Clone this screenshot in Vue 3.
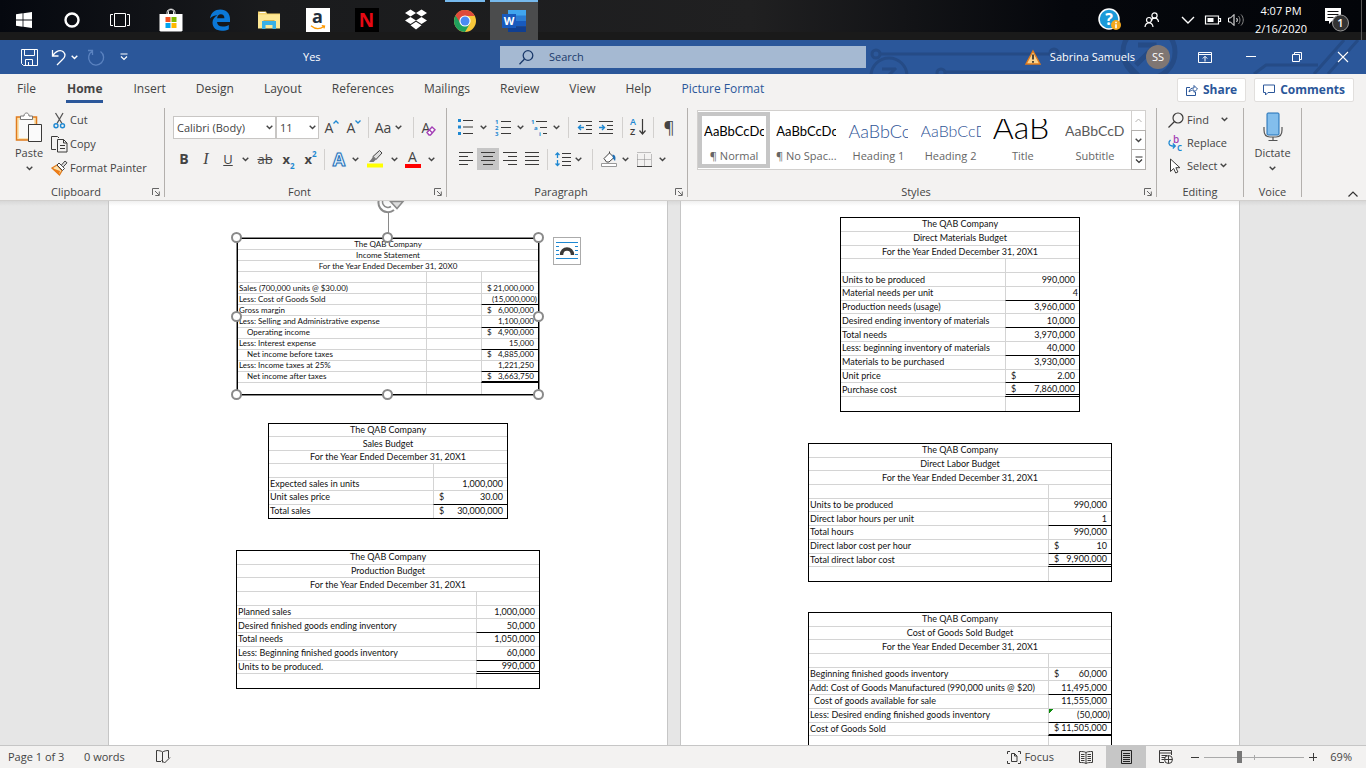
<script setup>
import {h, ref} from "vue";

const Caret = () => h('svg', {class: 'caret', width: 7, height: 5, viewBox: '0 0 7 5'}, [
    h('path', {d: 'M.7.8 3.5 3.6 6.3.8', fill: 'none', stroke: 'currentColor', 'stroke-width': 1.4})
])
const Launcher = () => h('svg', {class: 'launcher', width: 8, height: 8, viewBox: '0 0 8 8'}, [
    h('path', {d: 'M.5 7V.5H7M3 3l4 4M7.3 3.5v4h-4', fill: 'none', stroke: '#666'})
])

const tabs = ['File', 'Home', 'Insert', 'Design', 'Layout', 'References', 'Mailings', 'Review', 'View', 'Help', 'Picture Format']
const activeTab = ref('Home')
const zoom = ref(35)

const styles = [
    {name: '¶ Normal', sample: 'AaBbCcDc', kind: 'body'},
    {name: '¶ No Spac...', sample: 'AaBbCcDc', kind: 'body'},
    {name: 'Heading 1', sample: 'AaBbCc', kind: 'h1'},
    {name: 'Heading 2', sample: 'AaBbCcD', kind: 'h2'},
    {name: 'Title', sample: 'AaB', kind: 'title'},
    {name: 'Subtitle', sample: 'AaBbCcD', kind: 'subtitle'},
]
const activeStyle = ref('¶ Normal')

// line: 'under' is a subtotal rule, 'double' and 'thick' close the statement
const income = {
    id: 'income',
    cols: 3,
    heads: ['The QAB Company', 'Income Statement', 'For the Year Ended December 31, 20X0'],
    rows: [
        {},
        {label: 'Sales (700,000 units @ $30.00)', sign: '$', value: '21,000,000'},
        {label: 'Less: Cost of Goods Sold', value: '(15,000,000)', line: 'under', flush: true},
        {label: 'Gross margin', sign: '$', value: '6,000,000'},
        {label: 'Less: Selling and Administrative expense', value: '1,100,000', line: 'under'},
        {label: 'Operating income', sign: '$', value: '4,900,000', indent: true},
        {label: 'Less: Interest expense', value: '15,000', line: 'under'},
        {label: 'Net income before taxes', sign: '$', value: '4,885,000', indent: true},
        {label: 'Less: Income taxes at 25%', value: '1,221,250', line: 'under'},
        {label: 'Net income after taxes', sign: '$', value: '3,663,750', indent: true, line: 'thick'},
        {},
    ]
}
const sales = {
    id: 'sales',
    cols: 2,
    heads: ['The QAB Company', 'Sales Budget', 'For the Year Ended December 31, 20X1'],
    rows: [
        {},
        {label: 'Expected sales in units', value: '1,000,000'},
        {label: 'Unit sales price', sign: '$', value: '30.00', line: 'under'},
        {label: 'Total sales', sign: '$', value: '30,000,000'},
    ]
}
const production = {
    id: 'production',
    cols: 2,
    heads: ['The QAB Company', 'Production Budget', 'For the Year Ended December 31, 20X1'],
    rows: [
        {},
        {label: 'Planned sales', value: '1,000,000'},
        {label: 'Desired finished goods ending inventory', value: '50,000', line: 'under'},
        {label: 'Total needs', value: '1,050,000'},
        {label: 'Less: Beginning finished goods inventory', value: '60,000', line: 'under'},
        {label: 'Units to be produced.', value: '990,000', line: 'double'},
        {},
    ]
}
const materials = {
    id: 'materials',
    cols: 2,
    heads: ['The QAB Company', 'Direct Materials Budget', 'For the Year Ended December 31, 20X1'],
    rows: [
        {},
        {label: 'Units to be produced', value: '990,000'},
        {label: 'Material needs per unit', value: '4', line: 'under', flush: true},
        {label: 'Production needs (usage)', value: '3,960,000'},
        {label: 'Desired ending inventory of materials', value: '10,000', line: 'under'},
        {label: 'Total needs', value: '3,970,000'},
        {label: 'Less: beginning inventory of materials', value: '40,000', line: 'under'},
        {label: 'Materials to be purchased', value: '3,930,000'},
        {label: 'Unit price', sign: '$', value: '2.00', line: 'under'},
        {label: 'Purchase cost', sign: '$', value: '7,860,000', line: 'double'},
        {},
    ]
}
const labor = {
    id: 'labor',
    cols: 2,
    heads: ['The QAB Company', 'Direct Labor Budget', 'For the Year Ended December 31, 20X1'],
    rows: [
        {},
        {label: 'Units to be produced', value: '990,000'},
        {label: 'Direct labor hours per unit', value: '1', line: 'under'},
        {label: 'Total hours', value: '990,000'},
        {label: 'Direct labor cost per hour', sign: '$', value: '10', line: 'under'},
        {label: 'Total direct labor cost', sign: '$', value: '9,900,000', line: 'double'},
        {},
    ]
}
const goods = {
    id: 'goods',
    cols: 2,
    heads: ['The QAB Company', 'Cost of Goods Sold Budget', 'For the Year Ended December 31, 20X1'],
    rows: [
        {},
        {label: 'Beginning finished goods inventory', sign: '$', value: '60,000'},
        {label: 'Add: Cost of Goods Manufactured (990,000 units @ $20)', value: '11,495,000', line: 'under'},
        {label: 'Cost of goods available for sale', value: '11,555,000', nudge: true},
        {label: 'Less: Desired ending finished goods inventory', value: '(50,000)', line: 'under', flush: true, flag: true},
        {label: 'Cost of Goods Sold', sign: '$', value: '11,505,000', line: 'thick'},
        {},
    ]
}
const pages = [[income, sales, production], [materials, labor, goods]]
const handles = ['tl', 'tc', 'tr', 'ml', 'mr', 'bl', 'bc', 'br']
</script>
<template>
    <div class="screen">
        <header class="taskbar">
            <div class="apps">
                <button aria-label="Start">
                    <svg width="16" height="16" viewBox="0 0 16 16" fill="#fff"><path d="M0 2.2 6.6 1.3V7.6H0zM7.4 1.2 16 0V7.6H7.4zM0 8.4H6.6V14.7L0 13.8zM7.4 8.4H16V16L7.4 14.8z"/></svg>
                </button>
                <button aria-label="Cortana">
                    <svg width="16" height="16" viewBox="0 0 16 16"><circle cx="8" cy="8" r="6.5" fill="none" stroke="#fff" stroke-width="2.4"/></svg>
                </button>
                <button aria-label="Task View">
                    <svg width="20" height="16" viewBox="0 0 20 16" fill="none" stroke="#fff"><path d="M4.500 1.500h11v13h-11zM3 2.500H.5v11H3M17 2.500h2.500v11H17"/></svg>
                </button>
                <button aria-label="Store">
                    <svg width="24" height="24" viewBox="0 0 24 24"><path d="M8 7V4.500C8 0 16 0 16 4.500V7M9.500 7V3.500C9.500 1 14.500 1 14.500 3.500V7" fill="none" stroke="#eee"/><path d="M.5 6h23v16.500l-1 1h-21l-1-1z" fill="#fff"/><path d="M6.500 9h5v5h-5z" fill="#f25022"/><path d="M12.500 9h5v5h-5z" fill="#7fba00"/><path d="M6.500 15h5v5h-5z" fill="#00a4ef"/><path d="M12.500 15h5v5h-5z" fill="#ffb900"/></svg>
                </button>
                <button aria-label="Edge">
                    <svg width="22" height="22" viewBox="0 0 22 22"><path d="M1 9.500C2 3.500 6 .5 11.300.5c6 0 9.700 4 9.700 9.600V13H8c.2 3 2.500 4.600 5.800 4.600 2.200 0 4.200-.6 6-1.600v4.300c-2 1-4.300 1.500-7 1.500-6 0-9.300-3.300-9.300-8.200C3.500 10.300 5.600 7.600 8.500 6.300 4.900 6.500 2.500 7.500 1 9.500zM8.100 9.200h7.300c0-2.600-1.300-4-3.500-4S8.500 6.800 8.100 9.200z" fill="#0b78d7"/></svg>
                </button>
                <button aria-label="File Explorer">
                    <svg width="22" height="20" viewBox="0 0 22 20"><path d="M0 1.500h8l1 2h13V18H0z" fill="#f5d36b"/><path d="M0 4.500h22V18.500H0z" fill="#fde794"/><path d="M1.500 2h6v1h-6z" fill="#fff"/><path d="M4 19v-8h14v8h-3.500v-4h-7v4z" fill="#38b0e6"/><path d="M5.500 11v-1h11v1z" fill="#d9b04a"/></svg>
                </button>
                <button aria-label="Amazon">
                    <span class="amazon"><b>a</b><svg width="16" height="5" viewBox="0 0 16 5"><path d="M1 .8C5 4.200 10 4.200 14 1.500M11.800.7 14.500 1 14 3.300" fill="none" stroke="#f90" stroke-width="1.300"/></svg></span>
                </button>
                <button aria-label="Netflix"><span class="netflix">N</span></button>
                <button aria-label="Dropbox">
                    <svg width="24" height="22" viewBox="0 0 24 22" fill="#fff"><path d="M6.500.5 12 4 6.500 7.500 1 4zM17.500.5 23 4l-5.500 3.500L12 4zM6.500 8 12 11.500 6.500 15 1 11.500zM17.500 8l5.500 3.500-5.500 3.500L12 11.500zM6.500 16.200 12 12.700l5.500 3.500L12 20.500z"/></svg>
                </button>
                <button class="running" aria-label="Chrome">
                    <svg width="24" height="24" viewBox="0 0 24 24"><circle cx="12" cy="12" r="11" fill="#f8c83a"/><path d="M12 12 2.500 6.500A11 11 0 0 0 12 23l5-8.500z" fill="#1fa15d"/><path d="M2.500 6.500A11 11 0 0 1 21.800 7H12a5 5 0 0 0-4.500 7.300z" fill="#de4b3c"/><circle cx="12" cy="12" r="5.600" fill="#fff"/><circle cx="12" cy="12" r="4.500" fill="#4a8af4"/></svg>
                </button>
                <button class="running current" aria-label="Word">
                    <svg width="24" height="22" viewBox="0 0 24 22"><path d="M6 0h18v6H6z" fill="#41a5ee"/><path d="M6 5.500h18V11H6z" fill="#2b7cd3"/><path d="M6 11h18v5.500H6z" fill="#185abd"/><path d="M6 16.500h18V22H6z" fill="#103f91"/><path d="M0 4h14v14H0z" fill="#185abd"/><text x="7" y="15" text-anchor="middle" font-family="Open Sans, sans-serif" font-weight="700" font-size="11" fill="#fff">W</text></svg>
                </button>
            </div>
            <div class="tray">
                <svg width="24" height="24" viewBox="0 0 24 24"><circle cx="11" cy="11" r="10" fill="#1a9ad9" stroke="#fff" stroke-width="1.500"/><text x="11" y="17" text-anchor="middle" font-family="Open Sans, sans-serif" font-weight="700" font-size="16" fill="#fff">?</text><circle cx="18" cy="17" r="5" fill="#f5a81c"/><path d="M18 13.800v1.500M18 16.300v4" stroke="#fff" stroke-width="1.600"/></svg>
                <svg width="16" height="16" viewBox="0 0 16 16" fill="none" stroke="#fff" stroke-width="1.200"><circle cx="10.500" cy="3.500" r="2.600"/><path d="M7.500 9c.5-4 6.500-4 7 1"/><circle cx="5" cy="8" r="2.500"/><path d="M1 15c.5-5.500 7.500-5.500 8 0"/></svg>
                <svg width="14" height="8" viewBox="0 0 14 8" fill="none" stroke="#fff" stroke-width="1.400"><path d="M1 1l6 6 6-6"/></svg>
                <svg width="16" height="10" viewBox="0 0 16 10"><path d="M.5 1h13v8H.5zM14 3.500h1.500v3H14" fill="none" stroke="#fff" stroke-width="1.200"/><path d="M2.500 3h6v4h-6z" fill="#fff"/></svg>
                <svg width="16" height="14" viewBox="0 0 16 14" fill="none" stroke="#fff"><path d="M.5 5h2L6 1.500v11L2.500 9h-2z"/><path d="M8.500 5c1 1 1 3 0 4"/><path d="M10.500 3c2 2 2 6 0 8M13 1.500c3 3 3 8 0 11" stroke="#888"/></svg>
                <div class="clock"><span>4:07 PM</span><span>2/16/2020</span></div>
                <svg class="notes" width="24" height="26" viewBox="0 0 24 26"><path d="M0 1h16v13H7l-3 3v-3H0z" fill="#fff"/><path d="M2.500 4.500h11M2.500 7.500h11M2.500 10.500h6" stroke="#111"/><circle cx="15.500" cy="16" r="8" fill="#333" stroke="#999"/><text x="15.500" y="20" text-anchor="middle" font-family="Open Sans, sans-serif" font-size="11" font-weight="600" fill="#fff">1</text></svg>
            </div>
        </header>

        <div class="titlebar">
            <div class="quick">
                <button aria-label="Save"><svg width="17" height="17" viewBox="0 0 17 17" fill="none" stroke="#fff"><path d="M.5.5h16v16h-14l-2-2zM3.500.5v6h10v-6M4.500 16.500v-6h7v6M7.500 13v3.500"/></svg></button>
                <button aria-label="Undo"><svg width="16" height="17" viewBox="0 0 16 17" fill="none" stroke="#fff" stroke-width="1.300"><path d="M1.500 1v6h6M1.500 7C5 1 10 .5 12.500 3c2.500 2.500 1.500 5.500-1 7.500L6 16"/></svg></button>
                <Caret/>
                <button aria-label="Redo"><svg width="17" height="17" viewBox="0 0 17 17" fill="none" stroke="#5b83c0" stroke-width="1.300"><path d="M12.500 2.500a7.500 7.500 0 1 1-8-.5M4.500 6V1.500H0"/></svg></button>
                <button aria-label="Customize"><svg width="8" height="8" viewBox="0 0 8 8" fill="none" stroke="#fff" stroke-width="1.200"><path d="M.5 1h7M1 3.500l3 3 3-3"/></svg></button>
                <span class="doc-name">Yes</span>
            </div>
            <label class="search">
                <svg width="15" height="15" viewBox="0 0 15 15" fill="none" stroke="#1b3a6b" stroke-width="1.300"><circle cx="9" cy="5.500" r="4.800"/><path d="M5.500 9 .5 14.300"/></svg>
                <input type="text" placeholder="Search" aria-label="Search">
            </label>
            <div class="account">
                <svg class="circuit" width="500" height="34" viewBox="0 0 500 34" fill="none" stroke="#254b86" stroke-width="3"><circle cx="10" cy="14" r="4"/><path d="M14 14h171l8 5h65l14 15"/><circle cx="23" cy="36" r="18" /><path d="M16 29h12M30 28l-14 14"/><circle cx="75" cy="33" r="4"/><path d="M79 32h95"/><circle cx="188" cy="13" r="4"/><circle cx="283" cy="12" r="26" stroke-width="5"/><path d="M270 25l18-18M272 5h16v16" stroke-width="5"/><path d="M388 34l12-9h52M448 34 478 0M462 34 492 0"/></svg>
                <svg class="warn" width="16" height="15" viewBox="0 0 16 15"><path d="M8 1 15 14H1z" fill="#fbd28b" stroke="#e07b1d" stroke-width="1.400"/><path d="M8 4.500v5M8 11v1.700" stroke="#222" stroke-width="1.600"/></svg>
                <span class="user">Sabrina Samuels</span>
                <span class="avatar">SS</span>
                <button aria-label="Ribbon Display Options"><svg width="14" height="11" viewBox="0 0 14 11" fill="none" stroke="#fff"><path d="M.5.5h13v10H.5zM.5 2.500h13M7 9.500V4.500M4.800 6.500 7 4.300l2.200 2.200"/></svg></button>
                <button aria-label="Minimize"><svg width="10" height="10" viewBox="0 0 10 10" stroke="#fff"><path d="M0 4.500h10"/></svg></button>
                <button aria-label="Restore"><svg width="10" height="10" viewBox="0 0 10 10" fill="none" stroke="#fff"><path d="M.5 2.500h7v7h-7zM2.500 2V.5h7v7H8"/></svg></button>
                <button aria-label="Close"><svg width="10" height="10" viewBox="0 0 10 10" stroke="#fff" stroke-width="1.100"><path d="M0 0l10 10M10 0 0 10"/></svg></button>
            </div>
        </div>

        <nav class="tabs">
            <a v-for="tab in tabs" :key="tab" href="#" :class="{active: tab === activeTab, context: tab === 'Picture Format'}" @click.prevent="activeTab = tab">{{tab}}</a>
            <div class="tab-actions">
                <button><svg width="12" height="12" viewBox="0 0 12 12" fill="none" stroke="#2b579a"><path d="M4 3.500H.5v8h9V8M3 8c.5-3 2-4 5-4V1.500L11.500 5 8 8.300V6C6 6 4.500 6.500 3 8z"/></svg>Share</button>
                <button><svg width="12" height="12" viewBox="0 0 12 12" fill="none" stroke="#2b579a"><path d="M.5 1h11v7.500H5L2.500 11V8.500h-2z"/></svg>Comments</button>
            </div>
        </nav>

        <div class="ribbon">
            <section class="group clipboard">
                <div class="clip-body">
                    <button class="big">
                        <svg width="28" height="31" viewBox="0 0 28 31"><path d="M1.500 5h20v23h-20z" fill="#fbe3b0" stroke="#e07b1d" stroke-width="1.500"/><path d="M4 8h15v18H4z" fill="#fafafa"/><path d="M5.500 7.500V4h3.500c0-4 5-4 5 0h3.500v3.500z" fill="#fff" stroke="#777"/><path d="M13.500 12.500h13v17h-13z" fill="#fafafa" stroke="#3b3a39"/></svg>
                        <span>Paste</span>
                        <Caret/>
                    </button>
                    <div class="stack">
                        <button><svg width="17" height="17" viewBox="0 0 17 17" fill="none"><path d="M4.500 1 11 11.500M12 1 6 11.500" stroke="#555" stroke-width="1.300"/><circle cx="5" cy="13.700" r="2" stroke="#1e88d2" stroke-width="1.400"/><circle cx="11.500" cy="13.700" r="2" stroke="#1e88d2" stroke-width="1.400"/></svg>Cut</button>
                        <button><svg width="17" height="17" viewBox="0 0 17 17" fill="none" stroke="#3b3a39"><path d="M5 13.500H.5V.5h6l1.500 1.500"/><path d="M6.500 3.500h6l3.500 3.500v9H6.500zM12.500 3.500V7H16M9 9.500h5M9 12.500h5" fill="#f3f2f1"/></svg>Copy</button>
                        <button><svg width="17" height="17" viewBox="0 0 17 17"><path d="M1 8l5-3 5 5.500L8.500 15z" fill="#fbe3b0" stroke="#e07b1d" stroke-width="1.300"/><path d="M1 8l8 3-1 4z" fill="#ee7d17"/><path d="M6 5l2-2 5.500 5.500-2 2z" fill="#fff" stroke="#444"/><path d="M10.500 5 14 1l2 1.800-3.700 4" fill="#ddd" stroke="#444"/></svg>Format Painter</button>
                    </div>
                </div>
                <footer><span>Clipboard</span><Launcher/></footer>
            </section>

            <section class="group font">
                <div class="row font-1">
                    <label class="pick"><select aria-label="Font"><option>Calibri (Body)</option></select><Caret/></label>
                    <label class="pick"><select aria-label="Font size"><option>11</option></select><Caret/></label>
                    <button class="grow" aria-label="Increase Font Size">A<svg width="6" height="4" viewBox="0 0 6 4" fill="none" stroke="#1e88d2" stroke-width="1.300"><path d="M.5 3.500 3 1l2.500 2.500"/></svg></button>
                    <button class="grow" aria-label="Decrease Font Size">A<svg width="6" height="4" viewBox="0 0 6 4" fill="none" stroke="#1e88d2" stroke-width="1.300"><path d="M.5.5 3 3 5.500.5"/></svg></button>
                    <i class="sep"></i>
                    <button class="aa">Aa</button>
                    <Caret/>
                    <i class="sep"></i>
                    <button class="clear" aria-label="Clear Formatting"><span>A</span><svg width="10" height="10" viewBox="0 0 10 10" fill="#fff" stroke="#a33fb5" stroke-width="1.400"><path d="M1 6.500 6 1l3 2.700L4.500 9H3zM3.500 4l3 3"/></svg></button>
                </div>
                <div class="row font-2">
                    <button><b>B</b></button>
                    <button><em>I</em></button>
                    <button><u>U</u></button>
                    <Caret/>
                    <button><s>ab</s></button>
                    <button class="script"><b>x</b><sub>2</sub></button>
                    <button class="script"><b>x</b><sup>2</sup></button>
                    <i class="sep"></i>
                    <button class="effects">A</button>
                    <Caret/>
                    <button aria-label="Highlight"><svg width="16" height="18" viewBox="0 0 16 18"><path d="M0 13.500h16V17.500H0z" fill="#ff0"/><path d="M6 6.500 12.500.5l2.500 2.500-6 6.500z" fill="#ddd" stroke="#444"/><path d="M6 6.500 4.500 9 2 12h4.500L9 9.500z" fill="#777"/></svg></button>
                    <Caret/>
                    <button class="colour">A</button>
                    <Caret/>
                </div>
                <footer><span>Font</span><Launcher/></footer>
            </section>

            <section class="group paragraph">
                <div class="row para-1">
                    <button aria-label="Bullets"><svg width="15" height="16" viewBox="0 0 15 16"><path d="M0 0h3v3H0zM0 6.500h3v3H0zM0 13h3v3H0z" fill="#1e88d2"/><path d="M5 1.500h10M5 8h10M5 14.500h10" stroke="#3b3a39"/></svg></button>
                    <Caret/>
                    <button aria-label="Numbering"><svg width="16" height="17" viewBox="0 0 16 17"><g class="nums"><text x="0" y="5">1</text><text x="0" y="11">2</text><text x="0" y="17">3</text></g><path d="M6 2.500h10M6 8.500h10M6 14.500h10" stroke="#3b3a39"/></svg></button>
                    <Caret/>
                    <button aria-label="Multilevel List"><svg width="17" height="17" viewBox="0 0 17 17"><g class="nums"><text x="0" y="5">1</text><text x="3" y="11">a</text><text x="8" y="17">i</text></g><path d="M5 2.500h11M9 8.500h7M12 14.500h4" stroke="#3b3a39"/></svg></button>
                    <Caret/>
                    <i class="sep"></i>
                    <button aria-label="Decrease Indent"><svg width="14" height="13" viewBox="0 0 14 13" fill="none" stroke="#3b3a39"><path d="M0 .5h14M8 4.500h6M8 8.500h6M0 12.500h14"/><path d="M.5 6.500H6M3 4 .5 6.500 3 9" stroke="#1e88d2" stroke-width="1.400"/></svg></button>
                    <button aria-label="Increase Indent"><svg width="14" height="13" viewBox="0 0 14 13" fill="none" stroke="#3b3a39"><path d="M0 .5h14M8 4.500h6M8 8.500h6M0 12.500h14"/><path d="M0 6.500h5.500M3 4l2.500 2.500L3 9" stroke="#1e88d2" stroke-width="1.400"/></svg></button>
                    <i class="sep"></i>
                    <button aria-label="Sort"><svg width="17" height="18" viewBox="0 0 17 18"><g class="sort"><text x="0" y="7" fill="#1e88d2">A</text><text x="0" y="17" fill="#3b3a39">Z</text></g><path d="M12.500 1v15M9.500 12.500l3 3.500 3-3.500" fill="none" stroke="#3b3a39" stroke-width="1.200"/></svg></button>
                    <i class="sep"></i>
                    <button class="pilcrow">¶</button>
                </div>
                <div class="row para-2">
                    <button aria-label="Align Left"><svg width="14" height="14" viewBox="0 0 14 14" stroke="#3b3a39"><path d="M0 .5h14M0 4.500h9M0 8.500h14M0 12.500h9"/></svg></button>
                    <button class="pressed" aria-label="Center"><svg width="14" height="14" viewBox="0 0 14 14" stroke="#3b3a39"><path d="M0 .5h14M2 4.500h10M0 8.500h14M2 12.500h10"/></svg></button>
                    <button aria-label="Align Right"><svg width="14" height="14" viewBox="0 0 14 14" stroke="#3b3a39"><path d="M0 .5h14M5 4.500h9M0 8.500h14M5 12.500h9"/></svg></button>
                    <button aria-label="Justify"><svg width="14" height="14" viewBox="0 0 14 14" stroke="#3b3a39"><path d="M0 .5h14M0 4.500h14M0 8.500h14M0 12.500h14"/></svg></button>
                    <i class="sep"></i>
                    <button aria-label="Line Spacing"><svg width="16" height="14" viewBox="0 0 16 14" fill="none" stroke="#3b3a39"><path d="M7 1.500h9M7 5.500h9M7 9.500h9M7 13.500h9"/><path d="M2.500 1v5M.5 3l2-2 2 2M2.500 8v5.500M.5 11.500l2 2 2-2" stroke="#1e88d2" stroke-width="1.300"/></svg></button>
                    <Caret/>
                    <i class="sep"></i>
                    <button aria-label="Shading"><svg width="16" height="16" viewBox="0 0 16 16"><path d="M3 7.500 8.500 2 13 6.500 8 11H5.500zM8.500 2V.5" fill="#fff" stroke="#444"/><path d="M11.500 3.500c3 .5 3.500 3 2.500 6.500L12 7.500z" fill="#1e6fb5"/><path d="M.5 12.500h15v3H.5z" fill="#fff" stroke="#999"/></svg></button>
                    <Caret/>
                    <button aria-label="Borders"><svg width="15" height="15" viewBox="0 0 15 15" fill="none" stroke="#888" stroke-dasharray="1 1"><path d="M.5.5h14M.5 2.500v11M7.500 2.500v11M14.500 2.500v11M.5 7.500h14"/><path d="M0 14.500h15" stroke="#444" stroke-dasharray="none"/></svg></button>
                    <Caret/>
                </div>
                <footer><span>Paragraph</span><Launcher/></footer>
            </section>

            <section class="group styles">
                <div class="gallery">
                    <button v-for="s in styles" :key="s.name" class="style" :class="{chosen: s.name === activeStyle}" @click="activeStyle = s.name">
                        <span class="sample" :class="s.kind">{{s.sample}}</span>
                        <span class="style-name">{{s.name}}</span>
                    </button>
                    <div class="scroll">
                        <button disabled aria-label="Up"><svg width="7" height="5" viewBox="0 0 7 5" fill="none" stroke="#b5b3b1"><path d="M.5 4l3-3 3 3"/></svg></button>
                        <button aria-label="Down"><Caret/></button>
                        <button aria-label="More"><svg width="8" height="8" viewBox="0 0 8 8" fill="none" stroke="#333" stroke-width="1.200"><path d="M.5 1h7M1 3.500l3 3 3-3"/></svg></button>
                    </div>
                </div>
                <footer><span>Styles</span><Launcher/></footer>
            </section>

            <section class="group editing">
                <div class="stack">
                    <button><svg width="16" height="16" viewBox="0 0 16 16" fill="none" stroke="#3b3a39" stroke-width="1.200"><circle cx="10" cy="6" r="5"/><path d="M6.500 9.500.5 15.500"/></svg>Find<Caret class="far"/></button>
                    <button><svg width="16" height="16" viewBox="0 0 16 16"><g font-family="Open Sans, sans-serif" font-size="10" font-weight="600"><text x="5" y="8" fill="#a33fb5">b</text><text x="9" y="16" fill="#1e88d2">c</text></g><path d="M2.500 5c-2.500 2-2 5.500 1.500 6h3M4.800 8.500 7.300 11l-2.500 2.500" fill="none" stroke="#1e88d2" stroke-width="1.300"/></svg>Replace</button>
                    <button><svg width="16" height="16" viewBox="0 0 16 16" fill="#fff" stroke="#3b3a39"><path d="M2.500 1v12.500L5.700 10.500l2 4.500 2.200-1-2-4.300h4z"/></svg>Select<Caret/></button>
                </div>
                <footer><span>Editing</span></footer>
            </section>

            <section class="group voice">
                <button class="big">
                    <svg width="20" height="31" viewBox="0 0 20 31"><rect x="4" y="1" width="12" height="22" rx="1" fill="#83beec" stroke="#1e6fb5"/><path d="M1 15v3c0 4 2 7 6 7h6c4 0 6-3 6-7v-3M10 25v3M5.500 28.500h9" fill="none" stroke="#555" stroke-width="1.200"/></svg>
                    <span>Dictate</span>
                    <Caret/>
                </button>
                <footer><span>Voice</span></footer>
            </section>
            <button class="collapse" aria-label="Collapse the Ribbon"><svg width="10" height="6" viewBox="0 0 10 6" fill="none" stroke="#333" stroke-width="1.200"><path d="M.5 5.500 5 1l4.500 4.500"/></svg></button>
        </div>

        <main class="workspace">
            <article v-for="(page, p) in pages" :key="p" class="page" :class="'page-' + (p + 1)">
                <div v-for="sheet in page" :key="sheet.id" class="frame">
                    <table class="sheet" :class="sheet.id">
                        <colgroup>
                            <col>
                            <col v-if="sheet.cols === 3" class="mid">
                            <col class="amount">
                        </colgroup>
                        <tbody>
                            <tr v-for="head in sheet.heads" :key="head"><th :colspan="sheet.cols">{{head}}</th></tr>
                            <tr v-for="(row, i) in sheet.rows" :key="i">
                                <td :class="{indent: row.indent, nudge: row.nudge}">{{row.label}}</td>
                                <td v-if="sheet.cols === 3"></td>
                                <td class="value" :class="[row.line, {flush: row.flush, flag: row.flag}]"><span v-if="row.sign" class="sign">{{row.sign}}</span>{{row.value}}</td>
                            </tr>
                        </tbody>
                    </table>
                    <template v-if="sheet.id === 'income'">
                        <div class="selection">
                            <i class="stem"></i>
                            <svg class="rotate" width="28" height="22" viewBox="0 0 28 22" fill="none" stroke="#8a8a8a"><path d="M18 17A9.500 9.500 0 1 1 20.500 5.500" stroke-width="2"/><path d="M15 13.500a5.500 5.500 0 1 1 2-7" stroke-width="1.500"/><path d="M14.500 8.500h12.500L21 15.500z" fill="#ddd" stroke-width="1.500"/></svg>
                            <i v-for="handle in handles" :key="handle" class="handle" :class="handle"></i>
                        </div>
                        <button class="layout-options" aria-label="Layout Options"><svg width="22" height="18" viewBox="0 0 22 18" fill="none"><path d="M0 .5h22M0 4.500h3M19 4.500h3M0 8.500h3M19 8.500h3M0 12.500h3M19 12.500h3M0 16.500h22" stroke="#1e88d2"/><path d="M5.500 13c0-8 11-8 11 0" stroke="#3b3a39" stroke-width="3.500"/></svg></button>
                    </template>
                </div>
            </article>
        </main>

        <footer class="status">
            <span class="pages">Page 1 of 3</span>
            <span class="words">0 words</span>
            <svg width="15" height="14" viewBox="0 0 15 14" fill="none" stroke="#3b3a39"><path d="M6.500 12.500V2C5.500 1 3 .5.500.5v11H5M6.500 2C8 1 10.500.5 12.500.5V8M5.500 10l3 3L14 7.500"/></svg>
            <button class="focus"><svg width="14" height="13" viewBox="0 0 14 13" fill="none" stroke="#3b3a39"><path d="M3 .5H.5V3M11 .5h2.500V3M.5 10v2.500H3M13.500 10v2.500H11M4.500 2.500h3l2.500 2.500v5.500H4.500zM7.500 2.500V5H10"/></svg>Focus</button>
            <button class="view" aria-label="Read Mode"><svg width="14" height="13" viewBox="0 0 14 13" fill="none" stroke="#3b3a39"><path d="M7 12.500V1.500C5.500.5 3 .5.500.5v11c3 0 5 0 6.500 1 1.500-1 3.500-1 6.500-1V.5C11 .5 8.500.5 7 1.500M2 3.500h3.500M2 5.500h3.500M2 7.500h3.500M2 9.500h3.500M8.500 3.500H12M8.500 5.500H12M8.500 7.500H12M8.500 9.500H12"/></svg></button>
            <button class="view on" aria-label="Print Layout"><svg width="11" height="14" viewBox="0 0 11 14" fill="none" stroke="#222"><path d="M.5.5h10v13H.5zM2 3.500h7M2 5.500h7M2 7.500h7M2 9.500h7M2 11.500h7"/></svg></button>
            <button class="view" aria-label="Web Layout"><svg width="14" height="14" viewBox="0 0 14 14" fill="none" stroke="#3b3a39"><path d="M5 12.500H.5V.5h12V5M.5 3h12M2.500 5.500H8M2.500 7.500H6M2.500 9.500H5"/><circle cx="9.500" cy="9.500" r="4"/><path d="M5.500 9.500h8M9.500 5.500v8"/></svg></button>
            <button class="step" aria-label="Zoom Out"><svg width="8" height="8" viewBox="0 0 8 8" stroke="#3b3a39"><path d="M0 4.500h8"/></svg></button>
            <input v-model="zoom" type="range" min="0" max="100" aria-label="Zoom">
            <button class="step" aria-label="Zoom In"><svg width="8" height="8" viewBox="0 0 8 8" stroke="#3b3a39"><path d="M0 4.500h8M4.500 0v8"/></svg></button>
            <span class="percent">69%</span>
        </footer>
    </div>
</template>

<style>
body {
    margin: 0;
    overflow: hidden;
}
</style>
<style scoped>
.screen {
    display: flex;
    flex-direction: column;
    height: 100vh;
    font-family: "Open Sans", "Liberation Sans", sans-serif;
    font-size: 11px;
    line-height: 16px;
    color: #444;
    background: #f3f2f1;
}
.screen * {
    box-sizing: border-box;
}
button {
    display: flex;
    align-items: center;
    justify-content: center;
    padding: 0;
    border: 0;
    background: none;
    font: inherit;
    color: inherit;
}
svg {
    display: block;
    flex: none;
    overflow: visible;
}
svg.caret {
    color: #444;
}

/* taskbar */
.taskbar {
    display: flex;
    justify-content: space-between;
    height: 40px;
    flex: none;
    background: linear-gradient(transparent 32px, #1a1a1a 32px), linear-gradient(90deg, #05080f, #1a1b1d 20%, #202021 55%, #05070c 78%, #030509);
    color: #fff;
}
.apps {
    display: flex;
}
.apps button {
    width: 49px;
}
.apps button:nth-child(-n+3) {
    width: 48px;
}
.apps button:nth-child(4) {
    margin-left: 2px;
}
.apps .running {
    width: 40px;
    margin: 0 5px;
    border-top: 2px solid #76b9ed;
}
.apps .current {
    width: 48px;
    margin: 0;
    background: #4b4c4d;
}
.amazon, .netflix {
    display: flex;
    flex-direction: column;
    align-items: center;
    width: 24px;
    height: 24px;
    background: #fff;
    color: #232f3e;
}
.amazon b {
    font-size: 18px;
    line-height: 17px;
    height: 17px;
}
.netflix {
    background: #000;
    color: #e50914;
    font: 700 19px/24px "Open Sans", sans-serif;
}
.tray {
    display: flex;
    align-items: center;
    padding-right: 4px;
    border-right: 1px solid #555;
    margin-right: 4px;
}
.tray svg {
    margin-right: 22px;
}
.tray svg:nth-child(2) {
    margin-right: 21px;
}
.tray svg:nth-child(3) {
    margin-right: 10px;
}
.tray svg:nth-child(4) {
    margin-right: 7px;
}
.tray svg:nth-child(5) {
    margin-right: 10px;
}
.clock {
    display: flex;
    flex-direction: column;
    align-items: center;
    width: 54px;
    margin-right: 17px;
    line-height: 18px;
}
.tray svg.notes {
    margin-right: 8px;
}

/* title bar */
.titlebar {
    display: flex;
    height: 34px;
    flex: none;
    align-items: center;
    background: #2b579a;
    color: #fff;
}
.quick {
    display: flex;
    align-items: center;
    flex: 0 0 500px;
    padding-left: 21px;
}
.quick button {
    margin-right: 13px;
}
.quick button:nth-of-type(2) {
    margin-right: 4px;
}
.quick svg.caret {
    margin-right: 10px;
    color: #fff;
}
.quick button:nth-of-type(3) {
    margin-right: 15px;
}
.doc-name {
    margin-left: 162px;
}
.search {
    display: flex;
    flex: 1;
    align-items: center;
    gap: 15px;
    height: 22px;
    padding-left: 19px;
    background: #a5b9d2;
}
.search input {
    flex: 1;
    min-width: 0;
    padding: 0;
    border: 0;
    background: none;
    font: inherit;
    color: #1b3a6b;
}
.search input::placeholder {
    color: #1b3a6b;
    opacity: 1;
}
.account {
    position: relative;
    display: flex;
    align-items: center;
    justify-content: flex-end;
    flex: 0 0 500px;
    height: 34px;
    overflow: hidden;
    padding-right: 18px;
}
.account > * {
    position: relative;
}
.account .circuit {
    position: absolute;
    inset: 0;
}
.user {
    margin: 0 11px 0 9px;
}
.avatar {
    width: 24px;
    height: 24px;
    border-radius: 50%;
    background: #7f7673;
    line-height: 24px;
    text-align: center;
}
.account button {
    margin-left: 36px;
}
.account .avatar + button {
    margin-left: 28px;
    margin-right: -2px;
}

/* tabs */
.tabs {
    display: flex;
    align-items: center;
    gap: 30px;
    height: 31px;
    flex: none;
    padding: 0 12px 0 17px;
    font-size: 12px;
}
.tabs a {
    color: #444;
    text-decoration: none;
    line-height: 24px;
    height: 26px;
    white-space: nowrap;
}
.tabs a.active {
    padding: 0 1px;
    font-weight: 700;
    border-bottom: 3px solid #2b579a;
}
.tabs a.context {
    color: #2b579a;
}
.tab-actions {
    display: flex;
    gap: 8px;
    margin-left: auto;
}
.tab-actions button {
    gap: 5px;
    height: 24px;
    padding: 0 8px;
    border: 1px solid #e1dfdd;
    border-radius: 2px;
    background: #fff;
    color: #2b579a;
    font-weight: 700;
}

/* ribbon */
.ribbon {
    display: flex;
    align-items: flex-start;
    height: 96px;
    flex: none;
    padding-top: 3px;
    border-bottom: 1px solid #d2d0ce;
}
.group {
    display: flex;
    flex-direction: column;
    height: 89px;
    border-right: 1px solid #b3b0ad;
}
.group footer {
    display: flex;
    align-items: center;
    margin-top: auto;
    height: 10px;
    line-height: 10px;
}
.group footer span {
    flex: 1;
    text-align: center;
}
.launcher {
    margin-right: 4px;
}
.row {
    display: grid;
    align-items: center;
    justify-items: center;
    height: 22px;
    margin-left: 8px;
}
.row button {
    font-size: 14px;
    height: 22px;
}
.sep {
    width: 1px;
    height: 21px;
    background: #d2d0ce;
}
.big {
    flex-direction: column;
    justify-content: flex-start;
    padding-top: 4px;
    line-height: 20px;
}
.big svg.caret {
    margin-top: 3px;
}
.stack {
    display: flex;
    flex-direction: column;
}
.stack button {
    justify-content: flex-start;
    gap: 2px;
    height: 24px;
}
.clipboard {
    width: 165px;
}
.clip-body {
    display: flex;
    gap: 8px;
    padding-left: 15px;
}
.font {
    width: 282px;
    padding-top: 8px;
}
.font-1 {
    grid-template-columns: 103px 43px 26px 18px 11px 18px 12px 18px 14px;
    margin-bottom: 10px;
}
.font-2 {
    grid-template-columns: 22px 22px 22px 13px 26px 21px 23px 5px 24px 9px 30px 8px 29px 8px;
}
.pick {
    position: relative;
    width: 100%;
}
.pick select {
    display: block;
    appearance: none;
    width: 100%;
    height: 23px;
    padding: 0 3px;
    border: 1px solid #c8c6c4;
    border-radius: 0;
    background: #fff;
    font: inherit;
    color: #444;
}
.pick svg.caret {
    position: absolute;
    right: 3px;
    top: 9px;
}
.grow svg {
    align-self: flex-start;
    margin-top: 3px;
}
.clear svg {
    margin: 6px 0 0 -4px;
}
.font-2 s, .font-2 u {
    font-size: 13px;
}
.font-2 em {
    font-family: "Liberation Serif", serif;
    font-size: 16px;
}
.script b {
    font-size: 13px;
}
.script sub, .script sup {
    font-size: 8px;
    line-height: 8px;
    font-weight: 700;
    color: #1e88d2;
}
.script sub {
    align-self: flex-end;
}
.script sup {
    align-self: flex-start;
    margin-top: 2px;
}
.row .effects {
    font-size: 18px;
    font-weight: 700;
    color: #e8f3fb;
    -webkit-text-stroke: 1px #1e70b8;
    text-shadow: 0 0 2px #83beec;
}
.row .colour {
    width: 16px;
    height: 18px;
    line-height: 14px;
    align-items: flex-start;
    border-bottom: 4px solid #f00;
}
.paragraph {
    width: 241px;
    padding-top: 8px;
}
.para-1 {
    grid-template-columns: 20px 16px 24px 10px 28px 6px 19px 14px 28px 5px 26px 5px 26px;
    margin-bottom: 10px;
}
.para-2 {
    grid-template-columns: 22px 22px 22px 22px 9px 22px 9px 19px 14px 19px 19px 17px;
}
.nums {
    font: 700 6px "Open Sans", sans-serif;
    fill: #1e88d2;
}
.sort {
    font: 600 9px "Open Sans", sans-serif;
}
.row .pilcrow {
    font-size: 17px;
}
.row .pressed {
    width: 22px;
    background: #c6c6c6;
}
.styles {
    flex: 1;
    min-width: 0;
    padding-top: 2px;
}
.gallery {
    display: flex;
    height: 60px;
    margin: 0 10px 0 9px;
    border: 1px solid #d2d0ce;
    background: #fff;
}
.style {
    flex: 1;
    min-width: 0;
    flex-direction: column;
    justify-content: flex-start;
    margin: 1px 0;
    border: 4px solid transparent;
    color: #666;
}
.style.chosen {
    border-color: #c6c6c6;
}
.sample {
    width: 60px;
    height: 23px;
    margin-top: 3px;
    overflow: hidden;
    font-family: Lato, sans-serif;
    font-size: 13px;
    line-height: 24px;
    text-align: left;
    white-space: nowrap;
    color: #000;
}
.sample.h1 {
    font-size: 18px;
    font-weight: 300;
    color: #2f5496;
}
.sample.h2 {
    font-size: 16px;
    font-weight: 300;
    color: #2f5496;
}
.sample.title {
    font-size: 32px;
    font-weight: 300;
    line-height: 16px;
}
.sample.subtitle {
    font-size: 14px;
    color: #5a5a5a;
}
.style-name {
    margin-top: 8px;
    white-space: nowrap;
}
.scroll {
    display: flex;
    flex-direction: column;
    width: 15px;
    margin: -1px -1px -1px 0;
    flex: none;
}
.scroll button {
    flex: 1;
    border: 1px solid #b3b0ad;
    margin-top: -1px;
}
.scroll button:first-child {
    border-color: #d2d0ce;
    margin-top: 0;
}
.editing {
    width: 87px;
}
.editing .stack {
    padding-left: 11px;
}
.editing .stack button {
    height: 23px;
    gap: 3px;
}
.editing .far {
    margin-left: 9px;
}
.voice {
    width: 58px;
}
.collapse {
    width: 64px;
    padding-left: 37px;
    align-self: flex-end;
    height: 12px;
}

/* document area */
.workspace {
    display: flex;
    justify-content: center;
    gap: 12px;
    flex: 1;
    min-height: 0;
    overflow: hidden;
    padding-right: 18px;
    background: linear-gradient(#d8d8d8, #e6e6e6 5px);
}
.page {
    width: 560px;
    padding-top: 36px;
    background: linear-gradient(#f0f0f0, #fff 5px);
    border: solid #c6c6c6;
    border-width: 0 1px;
    display: flex;
    flex-direction: column;
    align-items: center;
}
.page-2 {
    padding-top: 16px;
}
.frame {
    position: relative;
    flex: none;
    margin-bottom: 31px;
}
.page-1 .frame:first-child {
    margin-bottom: 27px;
}
.page-2 .frame:nth-child(2) {
    margin-bottom: 30px;
}
.sheet {
    table-layout: fixed;
    border-collapse: separate;
    border-spacing: 0;
    width: 304px;
    height: 139px;
    border: 1px solid #000;
    font-family: Lato, sans-serif;
    font-size: 9px;
    line-height: 10px;
    color: #111;
}
.sheet.sales, .sheet.materials {
    width: 240px;
}
.sheet.sales {
    height: 96px;
}
.sheet.materials {
    height: 195px;
}
.sheet.income {
    height: 159px;
    border-width: 2px;
    font-size: 8px;
    line-height: 9px;
}
.sheet .amount {
    width: 63px;
}
.sheet .mid {
    width: 55px;
}
.income .amount {
    width: 57px;
}
.sales .amount, .materials .amount {
    width: 74px;
}
.sheet th, .sheet td {
    height: 13px;
    padding: 0 1px;
    border-bottom: 1px solid #d4d4d4;
    font-weight: 400;
    white-space: nowrap;
}
.sheet.income th, .sheet.income td {
    height: 11px;
}
.sheet td + td {
    border-left: 1px solid #d4d4d4;
}
.sheet tbody tr:last-child td {
    border-bottom: 0;
}
.sheet .value {
    padding: 0 4px 0 5px;
    text-align: right;
}
.sheet .flush {
    padding-right: 1px;
}
.sheet .indent {
    padding-left: 9px;
}
.sheet .nudge {
    padding-left: 5px;
}
.sheet .under {
    border-bottom-color: #000;
}
.sheet .double {
    border-bottom: 3px double #000;
}
.sheet .thick {
    border-bottom: 2px solid #000;
}
.sheet .flag {
    background: linear-gradient(135deg, #0a8a0a 3px, transparent 3px);
}
.sign {
    float: left;
}
.selection {
    position: absolute;
    inset: 0;
    border: 1px solid #8a8a8a;
}
.stem {
    position: absolute;
    left: 50%;
    top: -26px;
    width: 1px;
    height: 26px;
    background: #8a8a8a;
}
.rotate {
    position: absolute;
    left: calc(50% - 12px);
    top: -45px;
}
.handle {
    position: absolute;
    left: 50%;
    top: 50%;
    width: 11px;
    height: 11px;
    margin: -6px;
    border: 2px solid #8a8a8a;
    border-radius: 50%;
    background: #fff;
}
.tl, .ml, .bl {
    left: 0;
}
.tr, .mr, .br {
    left: 100%;
}
.tl, .tc, .tr {
    top: 0;
}
.bl, .bc, .br {
    top: 100%;
}
.layout-options {
    position: absolute;
    left: calc(100% + 13px);
    top: 0;
    width: 28px;
    height: 28px;
    border: 1px solid #ababab;
    background: #fff;
}

/* status bar */
.status {
    display: flex;
    align-items: center;
    height: 23px;
    flex: none;
    padding: 0 14px 0 8px;
    border-top: 1px solid #c6c6c6;
}
.pages {
    width: 76px;
}
.words {
    width: 72px;
}
.focus {
    gap: 3px;
    margin-left: auto;
    margin-right: 12px;
}
.view {
    width: 40px;
    height: 22px;
}
.view.on {
    background: #c6c6c6;
}
.step {
    margin: 0 5px;
}
.status input {
    appearance: none;
    width: 100px;
    height: 12px;
    margin: 0;
    background: linear-gradient(#aaa, #aaa) center / 1px 5px no-repeat, linear-gradient(#aaa, #aaa) center / 100% 1px no-repeat;
}
.status input::-webkit-slider-thumb {
    appearance: none;
    width: 5px;
    height: 12px;
    background: #777;
}
.percent {
    width: 30px;
    text-align: right;
}
</style>
